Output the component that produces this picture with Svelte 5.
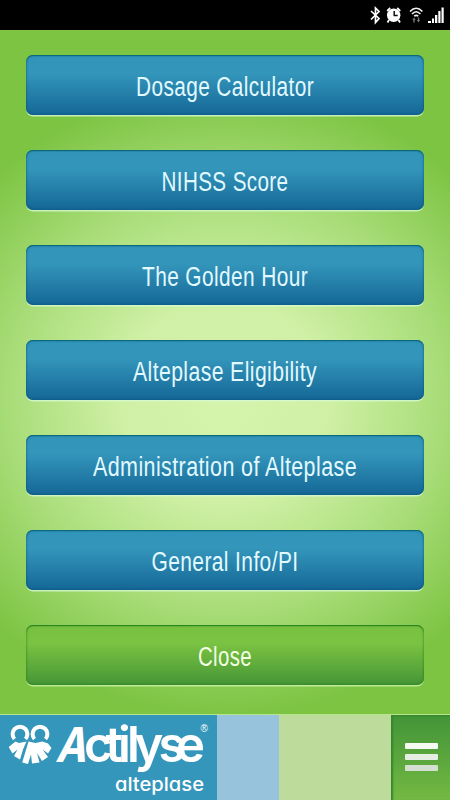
<script lang="ts">
  // width is the drawn length of the condensed label
  const items = [
    { label: 'Dosage Calculator', width: 178 },
    { label: 'NIHSS Score', width: 127 },
    { label: 'The Golden Hour', width: 166 },
    { label: 'Alteplase Eligibility', width: 184 },
    { label: 'Administration of Alteplase', width: 264 },
    { label: 'General Info/PI', width: 147 },
    { label: 'Close', width: 54, close: true }
  ];
</script>

<div class="screen">
  <header class="status">
    <svg width="84" height="28" viewBox="366 0 84 28" aria-hidden="true">
      <path d="M371 11l8 7.500-3.500 4V8l3.500 3.500-8 8" fill="none" stroke="#fff" stroke-width="1.7" />
      <circle cx="393.700" cy="15.200" r="6.700" fill="#fff" />
      <path d="M387.200 11l3-3M400.200 11l-3-3M389 20l-1.500 2.500M398.500 20l1.500 2.500" stroke="#fff" stroke-width="1.800" />
      <path d="M394.200 11v4.500h3.500" fill="none" stroke="#111" stroke-width="1.500" />
      <path d="M410 11.500q6.200-6.500 12.400 0M412 14q4.200-4.500 8.400 0M414.200 16.300q2-2 4 0" fill="none" stroke="#f2f2f2" stroke-width="1.600" />
      <path d="M412.300 20l1.700-2.500 1.700 2.500h-1v2.500h-1.400V20zM416.800 20l1.700 2.500 1.700-2.500h-1v-2.500h-1.400V20z" fill="#777" />
      <path d="M428 21h3v2h-3zM432 18.500h2v4.500h-2zM435 15h2.300v8H435zM438.300 11h2.200v12h-2.200zM441.500 7.500h2.200v15.500h-2.200z" fill="#fff" />
    </svg>
  </header>

  <main class="menu">
    {#each items as item}
      <button class="item" class:close={item.close}>
        <svg width="398" height="59" viewBox="0 0 398 59">
          <text x={199 - item.width / 2} y="40" textLength={item.width} lengthAdjust="spacingAndGlyphs">{item.label}</text>
        </svg>
      </button>
    {/each}
  </main>

  <footer class="bar">
    <div class="brand">
      <svg width="217" height="85" viewBox="0 715 217 85">
        <g fill="none" stroke="#fff" stroke-width="4">
          <path d="M14.500 739a7.400 7.400 0 1 1 11 0" />
          <path d="M34.500 739a7.400 7.400 0 1 1 11 0" />
        </g>
        <path class="ink" d="M15.500 741.500l3.500 1.500 7.500-1.500-3.500 8-3 10-6-3.500 3.500-6.500-5 4-3.800-6.500z" />
        <path class="ink" d="M28.500 741.500l7 1.500 7-1.500 5.500 2 3.500 4.500-3.500 5.500-5.500-4 5.500 7.500-6 4-5-8 2.500 9.500-7.500 1-1-9-3 9.500-5.800-1.500z" />
        <text class="name" transform="translate(55 761.5) skewX(-13) scale(.86 1)">A</text>
        <text class="name low" x="84 105.500 118 127 134.500 158.500 176" y="761.500">ctilyse</text>
        <text class="reg" x="200.500" y="731.500">®</text>
        <text class="sub" x="115" y="790.500" textLength="89" lengthAdjust="spacingAndGlyphs">alteplase</text>
      </svg>
    </div>
    <div class="sky"></div>
    <div class="lime"></div>
    <button class="toggle" aria-label="Menu">
      <span></span>
      <span></span>
      <span></span>
    </button>
  </footer>
</div>

<style>
  :global(body) {
    margin: 0;
  }
  .screen {
    display: flex;
    flex-direction: column;
    width: 450px;
    height: 800px;
    overflow: hidden;
    background: radial-gradient(ellipse 325px 315px at 225px 400px, #d5f4ad 0%, #cff0a5 32%, #a9dd79 66%, #7dc443 100%);
  }
  svg {
    display: block;
  }
  .status {
    display: flex;
    justify-content: flex-end;
    height: 30px;
    background: #000;
  }
  .menu {
    display: flex;
    flex: 1;
    flex-direction: column;
    gap: 35px;
    padding: 25px 26px 0;
  }
  .item {
    height: 60px;
    padding: 0;
    border: 0;
    border-radius: 7px;
    background: linear-gradient(#3194b9 0%, #3496bb 30%, #146796 100%);
    box-shadow:
      inset 0 1px 1px #08667b,
      inset 0 0 3px rgba(0, 65, 100, 0.6),
      0 1.5px 0.5px rgba(215, 250, 210, 0.8);
  }
  .item text {
    font-family: 'Liberation Sans Narrow', 'Liberation Sans', Arial, sans-serif;
    font-size: 27px;
    letter-spacing: 0.5px;
    fill: #e2f9ff;
  }
  .close {
    background: linear-gradient(#78c040 0%, #7bc342 30%, #459536 100%);
    box-shadow:
      inset 0 1px 1px #23831d,
      inset 0 0 3px rgba(20, 100, 15, 0.6),
      0 1.5px 0.5px rgba(205, 245, 170, 0.8);
  }
  .item.close text {
    fill: #f2ffe2;
  }
  .bar {
    display: flex;
    height: 85px;
    border-top: 1px solid #b5e58c;
  }
  .brand {
    width: 217px;
    background: #3496bb;
  }
  .ink,
  .brand text {
    fill: #fff;
  }
  .name {
    font-family: Inter, sans-serif;
    font-size: 48px;
    font-weight: 700;
  }
  .low {
    font-size: 49px;
    font-weight: 600;
  }
  .brand .reg {
    font-family: 'Liberation Sans', sans-serif;
    font-size: 10px;
  }
  .sub {
    font-family: Inter, sans-serif;
    font-size: 19px;
    font-weight: 500;
    font-feature-settings: 'cv11';
  }
  .sky {
    width: 62px;
    background: #97c4dc;
  }
  .lime {
    width: 112px;
    background: #bddb9b;
  }
  .toggle {
    display: flex;
    flex: 1;
    flex-direction: column;
    align-items: center;
    gap: 5px;
    padding: 28px 0 0 2px;
    border: 0;
    background: linear-gradient(#429438, #73b943);
    box-shadow: inset 2px 1px 2px #37852c;
  }
  .toggle span {
    width: 33px;
    height: 6px;
    border-radius: 1px;
    background: #f5fbf2;
  }
  .toggle span:nth-child(2) {
    background: #e6ede2;
  }
  .toggle span:nth-child(3) {
    background: #d5dfd1;
  }
</style>
